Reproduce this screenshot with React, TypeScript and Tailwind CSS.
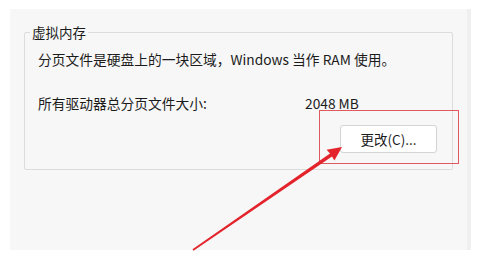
export default function App() {
  return (
    <div
      className="relative w-[479px] h-[261px] bg-white pt-[9px] pl-[10px] text-[#1b1b1b] overflow-hidden"
      style={{ fontFamily: '"Noto Sans CJK SC", "Noto Sans", sans-serif' }}
    >
      {/* Dialog surface */}
      <div className="w-[461px] h-[241px] bg-[#f7f7f7] border-r-4 border-[#efefef] pt-[23px] pl-[14px]">
        {/* Group box */}
        <div className="relative w-[429px] h-[138px] border border-[#dcdcdc] rounded-[2px] pl-[13px] pt-[16px]">
          <span className="absolute -top-[11px] left-[5px] bg-[#f7f7f7] px-[2px] text-[13.5px] leading-[20px]">
            虚拟内存
          </span>
          <p className="text-[13.75px] leading-[20px]">
            分页文件是硬盘上的一块区域，Windows 当作 RAM 使用。
          </p>
          <div className="flex mt-[24px] text-[13.75px] leading-[20px]">
            <span className="w-[267px]">所有驱动器总分页文件大小:</span>
            <span>2048 MB</span>
          </div>
          <button className="ml-[302px] mt-[12px] w-[97px] h-[28px] bg-white border border-[#d4d4d4] rounded-[3px] text-[13.5px] leading-[20px] flex items-center justify-center">
            更改(C)...
          </button>
        </div>
      </div>

      {/* Annotation: highlight box */}
      <div className="absolute left-[319px] top-[110px] w-[140px] h-[54px] border border-[#dd5a62] pointer-events-none" />

      {/* Annotation: arrow */}
      <svg className="absolute left-0 top-0 pointer-events-none" width="479" height="261" viewBox="0 0 479 261">
        <polygon
          points="193.5,250.7 332,156.5 334.4,160.4 342,147 326.6,149.8 330,153.5 192.5,249.3"
          fill="#e3242c"
        />
      </svg>
    </div>
  );
}
